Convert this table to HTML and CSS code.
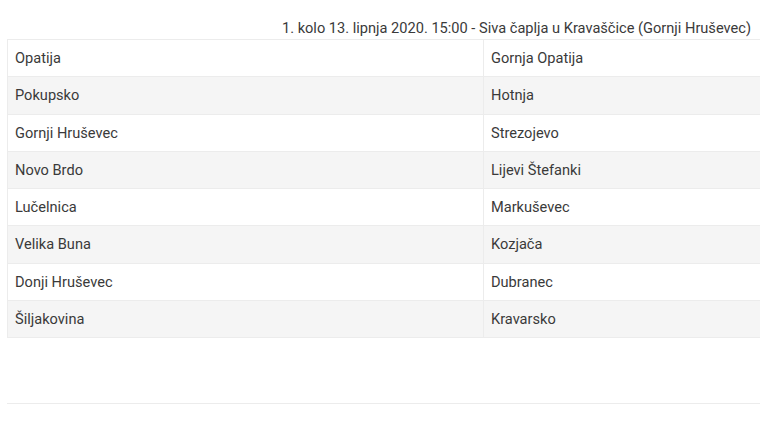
FILE: index.html
```html
<!DOCTYPE html>
<html lang="hr">
<head>
<meta charset="utf-8">
<link rel="stylesheet" href="styles.css">
</head>
<body>
<div class="page">
  <div class="caption">1. kolo 13. lipnja 2020. 15:00 - Siva čaplja u Kravaščice (Gornji Hruševec)</div>
  <table class="matches">
    <tbody>
      <tr><td>Opatija</td><td>Gornja Opatija</td></tr>
      <tr><td>Pokupsko</td><td>Hotnja</td></tr>
      <tr><td>Gornji Hruševec</td><td>Strezojevo</td></tr>
      <tr><td>Novo Brdo</td><td>Lijevi Štefanki</td></tr>
      <tr><td>Lučelnica</td><td>Markuševec</td></tr>
      <tr><td>Velika Buna</td><td>Kozjača</td></tr>
      <tr><td>Donji Hruševec</td><td>Dubranec</td></tr>
      <tr><td>Šiljakovina</td><td>Kravarsko</td></tr>
    </tbody>
  </table>
  <div class="rule"></div>
</div>
</body>
</html>
```
FILE: styles.css
```css
html, body {
  margin: 0;
  padding: 0;
  background: #fff;
  overflow: hidden;
}
body {
  font-family: Roboto, "Liberation Sans", sans-serif;
  font-size: 14.6px;
  color: #3a3a3a;
}
.page {
  padding-left: 7px;
  width: 953px;
}
.caption {
  width: 744px;
  text-align: right;
  padding-top: 18px;
  line-height: 21px;
}
.matches {
  border-collapse: collapse;
  width: 953px;
  table-layout: fixed;
  border: 1px solid #ececec;
}
.matches td {
  width: 50%;
  padding: 8px 7px;
  line-height: 20.25px;
  border-top: 1px solid #ececec;
  border-left: 1px solid #ececec;
  vertical-align: middle;
}
.matches tr:nth-child(even) td {
  background: #f5f5f5;
}
.rule {
  margin-top: 65px;
  border-top: 1px solid #ececec;
}
```
